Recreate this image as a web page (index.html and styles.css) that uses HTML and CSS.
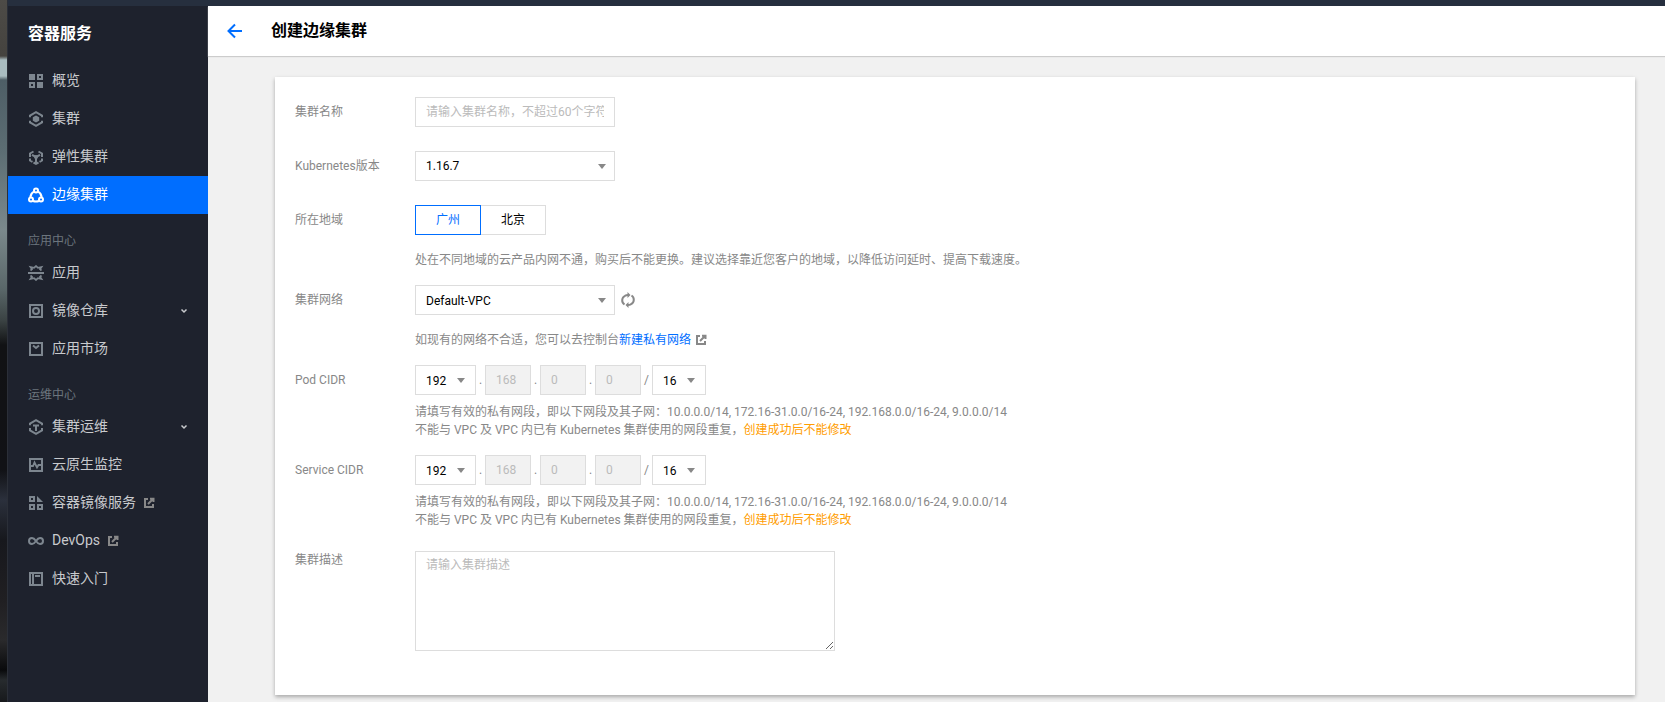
FILE: index.html
```html
<!DOCTYPE html>
<html lang="zh-CN">
<head>
<meta charset="utf-8">
<meta name="viewport" content="width=device-width, initial-scale=1">
<title>创建边缘集群</title>
<link rel="stylesheet" href="styles.css">
</head>
<body>
<svg class="defs" aria-hidden="true">
  <symbol id="i-ext" viewBox="0 0 12 12"><path d="M5 2H2v8h8V7M7 1.75h3.500V5M10.500 1.500 5 7" fill="none" stroke="currentColor" stroke-width="2"/></symbol>
  <symbol id="i-down" viewBox="0 0 8 8"><path d="M1.500 2.500 4 5l2.500-2.500" fill="none" stroke="currentColor" stroke-width="1.500"/></symbol>
</svg>
<div class="app">
  <div class="edge"></div>
  <div class="console">
    <div class="topbar"></div>
    <div class="shell">
      <nav class="side" aria-label="容器服务">
        <h2 class="side-title">容器服务</h2>
        <a class="item" href="#"><svg class="ico" viewBox="0 0 16 16"><path d="M1 1h6v6H1zM9 9h6v6H9z" fill="currentColor"/><path d="M10 2h4v4h-4zM2 10h4v4H2z" fill="none" stroke="currentColor" stroke-width="2"/></svg><span>概览</span></a>
        <a class="item" href="#"><svg class="ico" viewBox="0 0 16 16"><path d="M2 6.300V4.500L8 1.200l6 3.300v1.800M2 9.700v1.800l6 3.300 6-3.300V9.700" fill="none" stroke="currentColor" stroke-width="2"/><path d="m8 4.500 3.200 1.700v3.600L8 11.500 4.800 9.800V6.200z" fill="currentColor"/></svg><span>集群</span></a>
        <a class="item" href="#"><svg class="ico" viewBox="0 0 16 16"><path d="M5.500 2.500 2 4.500V8m0 1.500v2l2.500 1.400M10.500 2.500l3.500 2V8m0 1.500v2l-2.500 1.400M5.500 13.500 8 14.800l2.500-1.300M4 5.800 8 8m4-2.200L8 8m0 5.500V9" fill="none" stroke="currentColor" stroke-width="2"/><circle cx="8" cy="8" r="2" fill="currentColor"/></svg><span>弹性集群</span></a>
        <a class="item item-on" href="#" aria-current="page"><svg class="ico" viewBox="0 0 16 16"><g fill="none" stroke="currentColor" stroke-width="2"><circle cx="8" cy="3.500" r="2"/><circle cx="3" cy="12.500" r="2"/><circle cx="13" cy="12.500" r="2"/><path d="M6 4.500Q2.500 6.500 2.300 10.500M10 4.500q3.500 2 3.700 6M5 14q3 1 6 0"/></g></svg><span>边缘集群</span></a>
        <h3 class="group">应用中心</h3>
        <a class="item" href="#"><svg class="ico" viewBox="0 0 16 16"><path d="M0 8h16" stroke="currentColor" stroke-width="2"/><path d="M2.500 5.500 4 4.200 2.500 2l3.500.8L8 1l2 1.800 3.500-.8L12 4.200l1.500 1.300M2.500 10.500 4 11.800 2.500 14l3.500-.8L8 15l2-1.800 3.500.8-1.500-2.200 1.500-1.300" fill="none" stroke="currentColor" stroke-width="1.700"/></svg><span>应用</span></a>
        <a class="item" href="#"><svg class="ico" viewBox="0 0 16 16"><g fill="none" stroke="currentColor" stroke-width="2"><path d="M2 2h12v12H2z"/><circle cx="8" cy="8" r="3"/></g></svg><span>镜像仓库</span><svg class="chev"><use href="#i-down"/></svg></a>
        <a class="item" href="#"><svg class="ico" viewBox="0 0 16 16"><path d="M2 2h12v12H2zM5 4.500l3 2.500 3-2.500" fill="none" stroke="currentColor" stroke-width="2"/></svg><span>应用市场</span></a>
        <h3 class="group">运维中心</h3>
        <a class="item" href="#"><svg class="ico" viewBox="0 0 16 16"><path d="M2 6.300V4.500L8 1.200l6 3.300v1.800M2 9v2.500l6 3.300 6-3.300V9M5 6.500h6M8 6.500V12" fill="none" stroke="currentColor" stroke-width="2"/></svg><span>集群运维</span><svg class="chev"><use href="#i-down"/></svg></a>
        <a class="item" href="#"><svg class="ico" viewBox="0 0 16 16"><path d="M2 2h12v12H2z" fill="none" stroke="currentColor" stroke-width="2"/><path d="M3 9h2l1.500-3.500L9 10.500 10.500 8H13" fill="none" stroke="currentColor" stroke-width="1.800"/></svg><span>云原生监控</span></a>
        <a class="item" href="#"><svg class="ico" viewBox="0 0 16 16"><path d="M2 2h4v4H2zM2 10h4v4H2zM10 10h4v4h-4z" fill="none" stroke="currentColor" stroke-width="2"/><path d="M9 1v6h6z" fill="currentColor"/></svg><span>容器镜像服务</span><svg class="ext"><use href="#i-ext"/></svg></a>
        <a class="item" href="#"><svg class="ico" viewBox="0 0 16 16"><path d="M8 8C6.500 5.800 5.500 5 4 5a3 3 0 0 0 0 6c1.500 0 2.500-.8 4-3s2.500-3 4-3a3 3 0 0 1 0 6c-1.500 0-2.500-.8-4-3z" fill="none" stroke="currentColor" stroke-width="2"/></svg><span>DevOps</span><svg class="ext"><use href="#i-ext"/></svg></a>
        <a class="item" href="#"><svg class="ico" viewBox="0 0 16 16"><path d="M2 2h12v12H2zM5 2v12M7 5h5" fill="none" stroke="currentColor" stroke-width="2"/></svg><span>快速入门</span></a>
      </nav>
      <main class="main">
        <header class="head">
          <button class="back" type="button" aria-label="返回"><svg viewBox="0 0 16 16"><path d="M15 8H2.500M8 1.500 1.500 8 8 14.500" fill="none" stroke="currentColor" stroke-width="2"/></svg></button>
          <h1 class="title">创建边缘集群</h1>
        </header>
        <form class="card">
          <div class="row">
            <label class="label" for="name">集群名称</label>
            <div class="field"><input class="box wide" id="name" type="text" placeholder="请输入集群名称，不超过60个字符"></div>
          </div>
          <div class="row">
            <label class="label" for="ver">Kubernetes版本</label>
            <div class="field"><span class="pick wide"><select class="box" id="ver"><option>1.16.7</option></select></span></div>
          </div>
          <div class="row row-tip">
            <span class="label" id="region">所在地域</span>
            <div class="field">
              <div class="seg" role="group" aria-labelledby="region"><button class="seg-btn seg-on" type="button" aria-pressed="true">广州</button><button class="seg-btn" type="button" aria-pressed="false">北京</button></div>
              <p class="tip tip-far">处在不同地域的云产品内网不通，购买后不能更换。建议选择靠近您客户的地域，以降低访问延时、提高下载速度。</p>
            </div>
          </div>
          <div class="row row-tip">
            <label class="label" for="net">集群网络</label>
            <div class="field">
              <div class="line"><span class="pick wide"><select class="box" id="net"><option>Default-VPC</option></select></span><button class="reload" type="button" aria-label="刷新"><svg viewBox="0 0 16 16"><path d="M4.500 12.500A5 5 0 0 1 5 3.800Q6 3 8.500 3M11.500 3.500A5 5 0 0 1 11 12.200Q10 13 7.500 13" fill="none" stroke="currentColor" stroke-width="2"/><path d="M7.500 0v6l3-3zM8.500 10v6l-3-3z" fill="currentColor"/></svg></button></div>
              <p class="tip tip-far">如现有的网络不合适，您可以去控制台<a class="link" href="#">新建私有网络<svg class="ext"><use href="#i-ext"/></svg></a></p>
            </div>
          </div>
          <div class="row row-tip">
            <label class="label" for="pod">Pod CIDR</label>
            <div class="field">
              <div class="line"><span class="pick pick-sm first"><select class="box" id="pod"><option>192</option></select></span><span class="dot">.</span><input class="box octet" aria-label="Pod 第二段" value="168" disabled><span class="dot">.</span><input class="box octet" aria-label="Pod 第三段" value="0" disabled><span class="dot">.</span><input class="box octet" aria-label="Pod 第四段" value="0" disabled><span class="slash">/</span><span class="pick pick-sm mask"><select class="box" aria-label="Pod 掩码"><option>16</option></select></span></div>
              <p class="tip">请填写有效的私有网段，即以下网段及其子网：10.0.0.0/14, 172.16-31.0.0/16-24, 192.168.0.0/16-24, 9.0.0.0/14<br>不能与 VPC 及 VPC 内已有 Kubernetes 集群使用的网段重复，<span class="warn">创建成功后不能修改</span></p>
            </div>
          </div>
          <div class="row row-tip">
            <label class="label" for="svc">Service CIDR</label>
            <div class="field">
              <div class="line"><span class="pick pick-sm first"><select class="box" id="svc"><option>192</option></select></span><span class="dot">.</span><input class="box octet" aria-label="Service 第二段" value="168" disabled><span class="dot">.</span><input class="box octet" aria-label="Service 第三段" value="0" disabled><span class="dot">.</span><input class="box octet" aria-label="Service 第四段" value="0" disabled><span class="slash">/</span><span class="pick pick-sm mask"><select class="box" aria-label="Service 掩码"><option>16</option></select></span></div>
              <p class="tip">请填写有效的私有网段，即以下网段及其子网：10.0.0.0/14, 172.16-31.0.0/16-24, 192.168.0.0/16-24, 9.0.0.0/14<br>不能与 VPC 及 VPC 内已有 Kubernetes 集群使用的网段重复，<span class="warn">创建成功后不能修改</span></p>
            </div>
          </div>
          <div class="row">
            <label class="label" for="desc">集群描述</label>
            <div class="field"><textarea class="box area" id="desc" placeholder="请输入集群描述"></textarea></div>
          </div>
        </form>
      </main>
    </div>
  </div>
</div>
</body>
</html>
```
FILE: styles.css
```css
* { box-sizing: border-box; }
body {
  margin: 0;
  font: 12px/18px Roboto, "Noto Sans CJK SC", sans-serif;
  color: #888;
  background: #f1f1f1;
}
h1, h2, h3, p { margin: 0; }
button, input, select, textarea { font: inherit; margin: 0; }
.defs { display: none; }
.app { display: flex; min-height: 100vh; }
.edge {
  flex: none;
  width: 8px;
  border-right: 1px solid #2b2f38;
  background: linear-gradient(#4d4b47 0, #45433f 56px, #a9bcc0 60px, #a9bcc0 76px, #4e5e66 80px, #5c6d73 150px, #7b898c 230px, #596668 290px, #3b4344 320px, #111214 345px, #111216 470px, #2b303c 500px, #17181d 540px, #201f22 600px, #2a2a2c 640px, #090a0c 670px, #272b2e 680px, #17191c 702px);
}
.console { flex: 1; min-width: 0; display: flex; flex-direction: column; }
.topbar { height: 6px; background: #262f3e; }
.shell { flex: 1; display: flex; }

.side { flex: none; width: 200px; background: #1e222d; }
.side-title {
  height: 56px;
  padding-left: 20px;
  font-size: 16px;
  line-height: 56px;
  color: #fff;
}
.item {
  display: flex;
  align-items: center;
  height: 38px;
  padding: 0 20px;
  font-size: 14px;
  color: #c8cacd;
  text-decoration: none;
}
.item span { padding-bottom: 2px; }
.item-on { background: #006eff; color: #fff; }
.ico { width: 16px; height: 16px; margin-right: 8px; color: #7d868f; }
.item-on .ico { color: #fff; }
.chev { width: 8px; height: 8px; margin-left: auto; }
.ext { width: 12px; height: 12px; color: #888; }
.item .ext { margin-left: 7px; }
.group {
  height: 40px;
  padding: 4px 20px 0;
  font-size: 12px;
  font-weight: 400;
  line-height: 46px;
  color: #6c757d;
}

.main { flex: 1; min-width: 0; }
.head {
  display: flex;
  align-items: center;
  height: 50px;
  padding: 0 19px;
  background: #fff;
  box-shadow: 0 1px 1px #ccc;
}
.back {
  display: flex;
  width: 16px;
  height: 16px;
  margin-right: 28px;
  padding: 0;
  border: 0;
  background: none;
  color: #006eff;
}
.title { font-size: 16px; color: #000; line-height: 24px; }

.card {
  margin: 21px 30px 7px 67px;
  padding: 20px;
  background: #fff;
  box-shadow: 0 2px 4px rgba(0, 0, 0, .3);
}
.row { display: flex; margin-bottom: 24px; }
.row-tip { margin-bottom: 16px; }
.label { flex: none; width: 120px; line-height: 30px; }
.field { flex: 1; min-width: 0; }
.box {
  display: block;
  width: 100%;
  height: 30px;
  padding: 0 10px;
  border: 1px solid #ddd;
  border-radius: 0;
  outline: 0;
  background: #fff;
  color: #000;
  appearance: none;
}
.box::placeholder { color: #bbb; }
.box:disabled { background: #f2f2f2; color: #bbb; }
.wide { width: 200px; }
.pick { position: relative; display: block; }
.pick::after {
  content: "";
  position: absolute;
  top: 13px;
  right: 9px;
  border: 4px solid transparent;
  border-top: 5px solid #888;
  border-bottom: 0;
  pointer-events: none;
}
.pick-sm::after { right: 11px; }
.line { display: flex; height: 30px; line-height: 30px; }
.first { width: 61px; }
.octet { width: 46px; }
.mask { width: 54px; }
.dot { width: 9px; text-align: center; }
.slash { width: 11px; text-align: center; }
.seg { display: flex; }
.seg-btn {
  width: 66px;
  height: 30px;
  padding: 0;
  border: 1px solid #ddd;
  background: #fff;
  color: #000;
}
.seg-btn + .seg-btn { margin-left: -1px; }
.seg-on { z-index: 1; border-color: #006eff; color: #006eff; }
.reload {
  display: flex;
  align-items: center;
  width: 16px;
  margin-left: 5px;
  padding: 0;
  border: 0;
  background: none;
  color: #888;
}
.tip { margin-top: 8px; }
.tip-far { margin-top: 16px; }
.link { color: #006eff; text-decoration: none; }
.link .ext { margin: 3px 0 0 4px; vertical-align: top; }
.warn { color: #ff9d00; }
.area {
  width: 420px;
  height: 100px;
  margin-top: 6px;
  padding: 4px 10px;
  resize: both;
}
```
